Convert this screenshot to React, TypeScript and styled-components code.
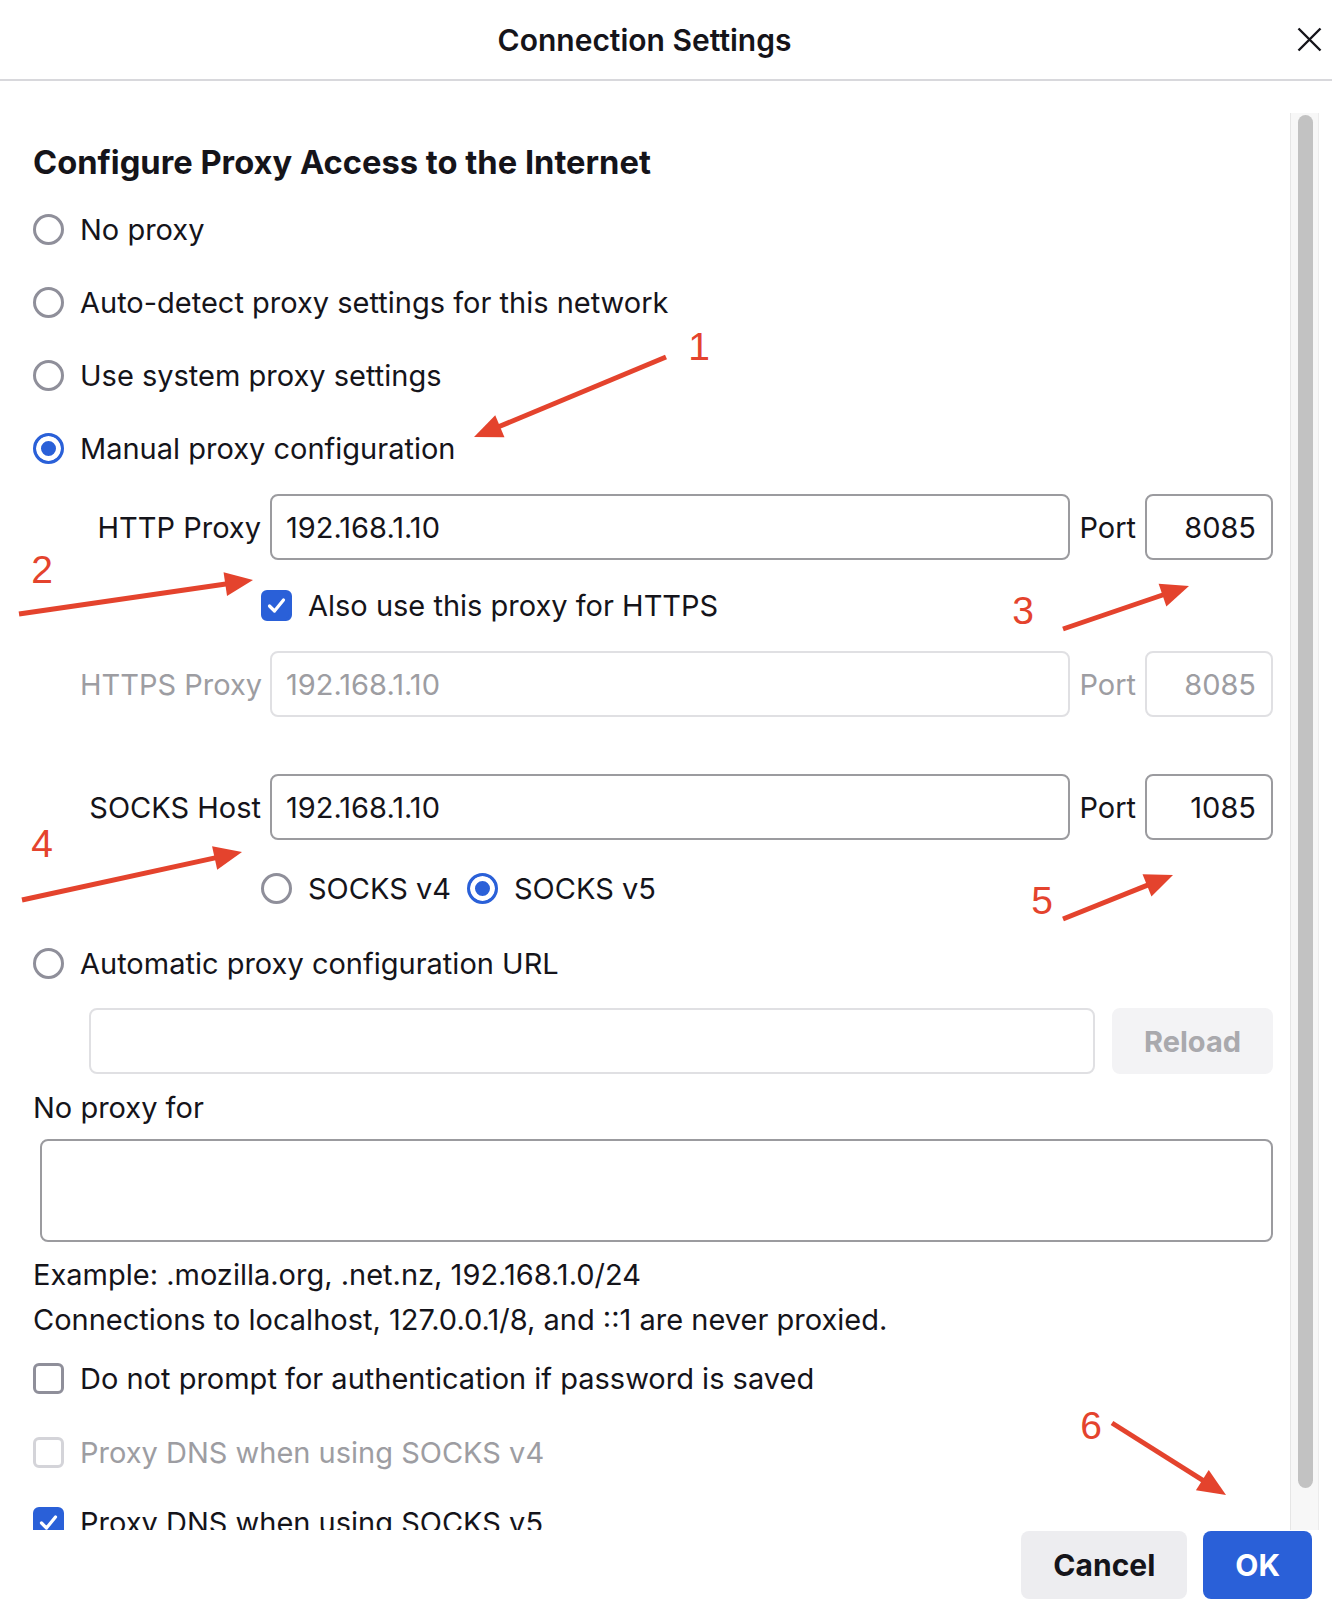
import React from 'react';
import styled, { createGlobalStyle, css } from 'styled-components';

const ACCENT = '#2a60d8';
const TEXT = '#15141a';
const MUTED = '#9d9da2';
const RED = '#e4432d';

const GlobalStyle = createGlobalStyle`
  html, body {
    margin: 0;
    padding: 0;
    background: #fff;
  }
  body {
    font-family: Inter, "Noto Sans", "Liberation Sans", sans-serif;
    color: ${TEXT};
  }
  * {
    box-sizing: border-box;
  }
`;

const SCPage = styled.div`
  position: relative;
  width: 1332px;
  height: 1616px;
  background: #fff;
  overflow: hidden;
  display: flex;
  flex-direction: column;
`;

const SCHeader = styled.header`
  height: 81px;
  flex-shrink: 0;
  display: flex;
  align-items: center;
  border-bottom: 2px solid #d8d8dc;
`;

const SCTitle = styled.h1`
  flex: 1;
  margin: 0;
  text-align: center;
  font-size: 30px;
  line-height: 40px;
  font-weight: 600;
`;

const SCCloseButton = styled.button`
  width: 25px;
  height: 25px;
  margin: 0 10px 0 8px;
  padding: 0;
  border: none;
  background: none;
  display: flex;
  cursor: pointer;
`;

const SCBody = styled.div`
  display: flex;
  padding-top: 32px;
  margin-right: 13px;
`;

const SCViewport = styled.div`
  flex: 1;
  height: 1417px;
  overflow: hidden;
`;

const SCTrack = styled.div`
  width: 29px;
  height: 1417px;
  padding: 2px 5px 0 7px;
  background: #f7f7f7;
  border-left: 1px solid #e6e6e6;
  border-right: 1px solid #ececec;
`;

const SCThumb = styled.div`
  height: 1373px;
  border-radius: 8px;
  background: #c2c2c2;
`;

const SCContent = styled.div`
  display: flex;
  flex-direction: column;
  padding: 29px 17px 33px 33px;
`;

const SCHeading = styled.h2`
  margin: 0;
  font-size: 32.7px;
  line-height: 40px;
  font-weight: 700;
`;

const SCOption = styled.label<{ $top?: number; $disabled?: boolean }>`
  display: flex;
  align-items: center;
  gap: 16px;
  height: 40px;
  margin-top: ${(p) => p.$top ?? 0}px;
  font-size: 29px;
  white-space: nowrap;
  color: ${(p) => (p.$disabled ? MUTED : TEXT)};
`;

const SCRadio = styled.span<{ $checked?: boolean }>`
  flex-shrink: 0;
  width: 31px;
  height: 31px;
  border-radius: 50%;
  border: 3px solid #8f8f9a;
  background: #fff;
  ${(p) =>
    p.$checked &&
    css`
      border-color: ${ACCENT};
      background: ${ACCENT};
      box-shadow: inset 0 0 0 5px #fff;
    `}
`;

const SCCheckbox = styled.span<{ $checked?: boolean; $disabled?: boolean }>`
  flex-shrink: 0;
  width: 31px;
  height: 31px;
  border-radius: 6px;
  border: 3px solid ${(p) => (p.$disabled ? '#d4d4d9' : '#8f8f9a')};
  background: #fff;
  display: flex;
  align-items: center;
  justify-content: center;
  ${(p) =>
    p.$checked &&
    css`
      border-color: ${ACCENT};
      background: ${ACCENT};
    `}
`;

const SCProxySection = styled.div`
  display: flex;
  flex-direction: column;
  margin-top: 26px;
  padding-left: 47px;
`;

const SCProxyRow = styled.div<{ $top?: number }>`
  display: grid;
  grid-template-columns: 181px 1fr auto 128px;
  column-gap: 9px;
  align-items: center;
  margin-top: ${(p) => p.$top ?? 0}px;
`;

const SCFieldLabel = styled.span<{ $disabled?: boolean }>`
  text-align: right;
  font-size: 29px;
  white-space: nowrap;
  color: ${(p) => (p.$disabled ? MUTED : TEXT)};
`;

const SCInput = styled.input<{ $align?: 'left' | 'right' }>`
  width: 100%;
  height: 66px;
  padding: 0 ${(p) => (p.$align === 'right' ? 15 : 14)}px 0 14px;
  border: 2px solid #9b9b9f;
  border-radius: 8px;
  background: #fff;
  font-family: Inter, "Noto Sans", "Liberation Sans", sans-serif;
  font-size: 29px;
  color: ${TEXT};
  text-align: ${(p) => p.$align ?? 'left'};
  outline: none;

  &:disabled {
    border-color: #e0e0e3;
    color: ${MUTED};
    background: #fff;
  }
`;

const SCSubRow = styled.div<{ $top: number }>`
  display: flex;
  align-items: center;
  gap: 16px;
  padding-left: 181px;
  margin-top: ${(p) => p.$top}px;
`;

const SCUrlRow = styled.div`
  display: flex;
  gap: 17px;
  margin-top: 25px;
  padding-left: 56px;
`;

const SCReloadButton = styled.button`
  flex-shrink: 0;
  width: 161px;
  height: 66px;
  border: none;
  border-radius: 8px;
  background: #f3f3f5;
  font-family: Inter, "Noto Sans", "Liberation Sans", sans-serif;
  font-size: 29px;
  font-weight: 700;
  color: #a9a9ad;
`;

const SCText = styled.p<{ $top: number }>`
  margin: ${(p) => p.$top}px 0 0;
  font-size: 29px;
  line-height: 40px;
  white-space: nowrap;
`;

const SCTextArea = styled.textarea`
  display: block;
  width: calc(100% - 7px);
  height: 103px;
  margin: 11px 0 0 7px;
  border: 2px solid #9b9b9f;
  border-radius: 8px;
  resize: none;
  outline: none;
  background: #fff;
`;

const SCFooter = styled.footer`
  display: flex;
  justify-content: flex-end;
  gap: 16px;
  padding: 1px 20px 0 0;
`;

const SCButton = styled.button<{ $primary?: boolean }>`
  height: 68px;
  padding: 0 ${(p) => (p.$primary ? 32 : 32)}px;
  border: none;
  border-radius: 8px;
  font-family: Inter, "Noto Sans", "Liberation Sans", sans-serif;
  font-size: 30px;
  font-weight: 700;
  cursor: pointer;
  background: ${(p) => (p.$primary ? ACCENT : '#ededf0')};
  color: ${(p) => (p.$primary ? '#fff' : TEXT)};
`;

const SCOverlay = styled.svg`
  position: absolute;
  left: 0;
  top: 0;
  pointer-events: none;
`;

const SCMark = styled.text`
  font-family: "Liberation Sans", Arial, sans-serif;
  font-size: 39px;
  fill: ${RED};
`;

const CheckMark = () => (
  <svg width="21" height="21" viewBox="0 0 21 21">
    <path d="M3.5 11 L8.5 16 L17.5 5" fill="none" stroke="#fff" strokeWidth="3.2" strokeLinecap="round" strokeLinejoin="round" />
  </svg>
);

type OptionProps = {
  label: string;
  kind?: 'radio' | 'checkbox';
  checked?: boolean;
  disabled?: boolean;
  top?: number;
};

const Option = ({ label, kind = 'radio', checked, disabled, top }: OptionProps) => (
  <SCOption $top={top} $disabled={disabled}>
    {kind === 'radio' ? (
      <SCRadio $checked={checked} />
    ) : (
      <SCCheckbox $checked={checked} $disabled={disabled}>
        {checked && <CheckMark />}
      </SCCheckbox>
    )}
    {label}
  </SCOption>
);

type ProxyRowProps = {
  label: string;
  host: string;
  port: string;
  disabled?: boolean;
  top?: number;
};

const ProxyRow = ({ label, host, port, disabled, top }: ProxyRowProps) => (
  <SCProxyRow $top={top}>
    <SCFieldLabel $disabled={disabled}>{label}</SCFieldLabel>
    <SCInput defaultValue={host} disabled={disabled} />
    <SCFieldLabel $disabled={disabled}>Port</SCFieldLabel>
    <SCInput defaultValue={port} disabled={disabled} $align="right" />
  </SCProxyRow>
);

// red call-outs drawn over the dialog
const marks = [
  { n: '1', nx: 699, ny: 346, x1: 666, y1: 357, x2: 474, y2: 437 },
  { n: '2', nx: 42, ny: 569, x1: 19, y1: 614, x2: 253, y2: 580 },
  { n: '3', nx: 1023, ny: 610, x1: 1063, y1: 629, x2: 1189, y2: 586 },
  { n: '4', nx: 42, ny: 843, x1: 22, y1: 900, x2: 242, y2: 852 },
  { n: '5', nx: 1042, ny: 900, x1: 1063, y1: 919, x2: 1173, y2: 875 },
  { n: '6', nx: 1091, ny: 1425, x1: 1112, y1: 1423, x2: 1226, y2: 1495 },
];

const Arrow = ({ x1, y1, x2, y2 }: { x1: number; y1: number; x2: number; y2: number }) => {
  const len = Math.hypot(x2 - x1, y2 - y1);
  const ux = (x2 - x1) / len;
  const uy = (y2 - y1) / len;
  const head = 28;
  const half = 12;
  const bx = x2 - ux * head;
  const by = y2 - uy * head;
  const pts = `${x2},${y2} ${bx - uy * half},${by + ux * half} ${bx + uy * half},${by - ux * half}`;
  return (
    <g>
      <line x1={x1} y1={y1} x2={bx + ux * 4} y2={by + uy * 4} stroke={RED} strokeWidth={5} />
      <polygon points={pts} fill={RED} />
    </g>
  );
};

const App = () => {
  return (
    <SCPage>
      <GlobalStyle />
      <SCHeader>
        <SCTitle>Connection Settings</SCTitle>
        <SCCloseButton aria-label="Close">
          <svg width="25" height="25" viewBox="0 0 25 25">
            <path d="M1.5 1.5 L23.5 23.5 M23.5 1.5 L1.5 23.5" stroke={TEXT} strokeWidth="2.4" />
          </svg>
        </SCCloseButton>
      </SCHeader>

      <SCBody>
        <SCViewport>
          <SCContent>
            <SCHeading>Configure Proxy Access to the Internet</SCHeading>
            <Option label="No proxy" top={27} />
            <Option label="Auto-detect proxy settings for this network" top={33} />
            <Option label="Use system proxy settings" top={33} />
            <Option label="Manual proxy configuration" checked top={33} />

            <SCProxySection>
              <ProxyRow label="HTTP Proxy" host="192.168.1.10" port="8085" />
              <SCSubRow $top={25}>
                <Option kind="checkbox" checked label="Also use this proxy for HTTPS" />
              </SCSubRow>
              <ProxyRow label="HTTPS Proxy" host="192.168.1.10" port="8085" disabled top={26} />
              <ProxyRow label="SOCKS Host" host="192.168.1.10" port="1085" top={57} />
              <SCSubRow $top={28}>
                <Option label="SOCKS v4" />
                <Option label="SOCKS v5" checked />
              </SCSubRow>
            </SCProxySection>

            <Option label="Automatic proxy configuration URL" top={35} />
            <SCUrlRow>
              <SCInput disabled />
              <SCReloadButton disabled>Reload</SCReloadButton>
            </SCUrlRow>

            <SCText $top={14}>No proxy for</SCText>
            <SCTextArea />
            <SCText $top={13}>Example: .mozilla.org, .net.nz, 192.168.1.0/24</SCText>
            <SCText $top={5}>Connections to localhost, 127.0.0.1/8, and ::1 are never proxied.</SCText>

            <Option kind="checkbox" label="Do not prompt for authentication if password is saved" top={18} />
            <Option kind="checkbox" disabled label="Proxy DNS when using SOCKS v4" top={34} />
            <Option kind="checkbox" checked label="Proxy DNS when using SOCKS v5" top={30} />
          </SCContent>
        </SCViewport>
        <SCTrack>
          <SCThumb />
        </SCTrack>
      </SCBody>

      <SCFooter>
        <SCButton>Cancel</SCButton>
        <SCButton $primary>OK</SCButton>
      </SCFooter>

      <SCOverlay width="1332" height="1616" viewBox="0 0 1332 1616">
        {marks.map((m) => (
          <g key={m.n}>
            <Arrow x1={m.x1} y1={m.y1} x2={m.x2} y2={m.y2} />
            <SCMark x={m.nx} y={m.ny + 14} textAnchor="middle">
              {m.n}
            </SCMark>
          </g>
        ))}
      </SCOverlay>
    </SCPage>
  );
};

export default App;
